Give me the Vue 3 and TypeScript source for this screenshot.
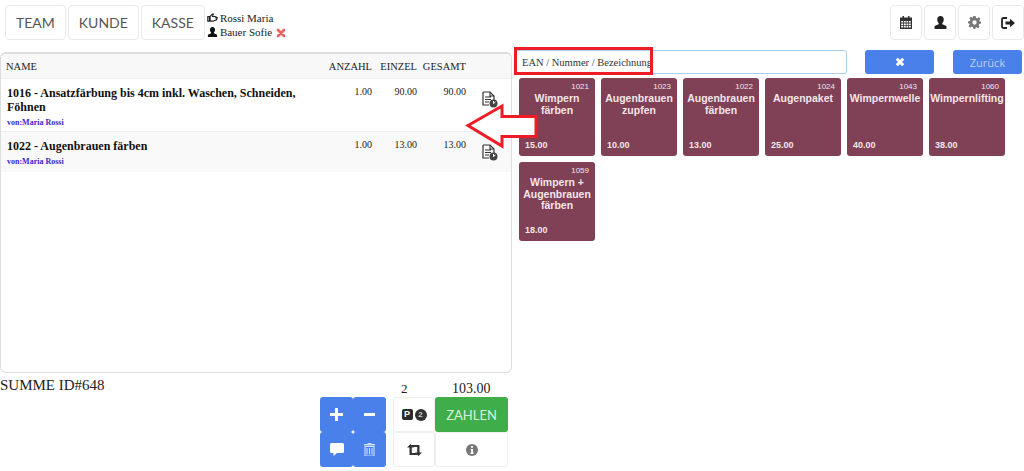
<script setup lang="ts">
interface CartItem {
  id: number;
  name: string;
  qty: string;
  single: string;
  total: string;
  by: string;
}

interface Tile {
  id: number;
  name: string;
  price: string;
}

const cart: CartItem[] = [
  { id: 1016, name: '1016 - Ansatzfärbung bis 4cm inkl. Waschen, Schneiden, Föhnen', qty: '1.00', single: '90.00', total: '90.00', by: 'von:Maria Rossi' },
  { id: 1022, name: '1022 - Augenbrauen färben', qty: '1.00', single: '13.00', total: '13.00', by: 'von:Maria Rossi' },
];

const tiles: Tile[] = [
  { id: 1021, name: 'Wimpern färben', price: '15.00' },
  { id: 1023, name: 'Augenbrauen zupfen', price: '10.00' },
  { id: 1022, name: 'Augenbrauen färben', price: '13.00' },
  { id: 1024, name: 'Augenpaket', price: '25.00' },
  { id: 1043, name: 'Wimpernwelle', price: '40.00' },
  { id: 1060, name: 'Wimpernlifting', price: '38.00' },
  { id: 1059, name: 'Wimpern + Augenbrauen färben', price: '18.00' },
];

const tabs = ['TEAM', 'KUNDE', 'KASSE'];
</script>

<template>
  <div class="page">
    <header class="top">
      <div class="tabs">
        <button v-for="tab in tabs" :key="tab" class="tab">{{ tab }}</button>
      </div>
      <div class="people">
        <div class="person">
          <svg class="mini" viewBox="0 0 14 12"><path d="M1 4h2v6H1zM4 4l3-3h1l-1 3h3a2 2 0 0 1 0 5l-2 1H4z" fill="none" stroke="#222" stroke-width="1.4" /><path d="M10 5h4v1.4h-4z" fill="#222" /></svg>
          Rossi Maria
        </div>
        <div class="person">
          <svg class="mini" viewBox="0 0 12 12"><path d="M6 0c2 0 3 1.400 3 3.200 0 1.500-.7 2.700-1.300 3.300v1l3.800 1.700V12H.5V9.200l3.800-1.700v-1C3.700 5.900 3 4.700 3 3.200 3 1.400 4 0 6 0z" fill="#111" /></svg>
          Bauer Sofie
          <svg class="cross" viewBox="0 0 10 10"><path d="M2 2l6 6M8 2l-6 6" stroke="#f0605f" stroke-width="2.600" stroke-linecap="round" /></svg>
        </div>
      </div>
      <div class="top-icons">
        <button class="icon-btn">
          <svg width="12" height="13" viewBox="0 0 12 13"><path d="M2.500 0h1.500v1.500h4V0h1.500v1.500H12V13H0V1.500h2.500z" fill="#333" /><path d="M1.200 5h2v1.600h-2zM4 5h1.800v1.600H4zM6.500 5h1.800v1.600H6.500zM9 5h1.800v1.600H9zM1.200 7.400h2V9h-2zM4 7.400h1.800V9H4zM6.500 7.400h1.800V9H6.500zM9 7.400h1.800V9H9zM1.200 9.800h2v1.800h-2zM4 9.800h1.800v1.800H4zM6.500 9.800h1.800v1.800H6.500zM9 9.800h1.800v1.800H9z" fill="#fff" /></svg>
        </button>
        <button class="icon-btn">
          <svg width="13" height="13" viewBox="0 0 12 12"><path d="M6 0c2 0 3 1.400 3 3.200 0 1.500-.7 2.700-1.300 3.300v1l3.800 1.700V12H.5V9.200l3.800-1.700v-1C3.700 5.900 3 4.700 3 3.200 3 1.400 4 0 6 0z" fill="#222" /></svg>
        </button>
        <button class="icon-btn">
          <svg width="13" height="13" viewBox="0 0 24 24"><path d="M10 0h4l.7 3.400 2.300 1 3-1.900 2.800 2.800-1.900 3 1 2.300L24 10v4l-3.400.7-1 2.300 1.900 3-2.800 2.800-3-1.900-2.300 1L14 24h-4l-.7-3.400-2.300-1-3 1.900-2.800-2.800 1.900-3-1-2.300L0 14v-4l3.400-.7 1-2.300-1.900-3L5.300 1.200l3 1.900 1-.9zM12 8a4 4 0 1 0 0 8 4 4 0 0 0 0-8z" fill="#777" fill-rule="evenodd" /></svg>
        </button>
        <button class="icon-btn">
          <svg width="14" height="12" viewBox="0 0 14 12"><path d="M6 1H2.500A1.500 1.500 0 0 0 1 2.500v7A1.500 1.500 0 0 0 2.500 11H6" fill="none" stroke="#222" stroke-width="1.800" /><path d="M4.500 4.500H9V1.800L14 6l-5 4.200V7.500H4.500z" fill="#222" /></svg>
        </button>
      </div>
    </header>

    <main class="main">
      <section class="left">
        <div class="panel">
          <div class="row head">
            <div class="col-name">NAME</div>
            <div class="col-num qty">ANZAHL</div>
            <div class="col-num single">EINZEL</div>
            <div class="col-num total">GESAMT</div>
            <div class="col-icon"></div>
          </div>
          <div v-for="item in cart" :key="item.id" class="row item">
            <div class="col-name">
              <div class="item-name">{{ item.name }}</div>
              <div class="item-by">{{ item.by }}</div>
            </div>
            <div class="col-num qty">{{ item.qty }}</div>
            <div class="col-num single">{{ item.single }}</div>
            <div class="col-num total">{{ item.total }}</div>
            <div class="col-icon">
              <svg width="16" height="17" viewBox="0 0 16 17">
                <path d="M1 1h7l4 4v4M1 1v13h6" fill="none" stroke="#333" stroke-width="1.200" />
                <path d="M8 1v4h4M3 6h6M3 8.500h6M3 11h4" fill="none" stroke="#333" stroke-width="1.100" />
                <circle cx="11.500" cy="12.500" r="4" fill="#444" />
                <path d="M11.500 10v2.500l2-1.500" fill="none" stroke="#fff" stroke-width="1" />
              </svg>
            </div>
          </div>
        </div>

        <div class="footer">
          <div class="sum-label">SUMME ID#648</div>
          <div class="count">2</div>
          <div class="sum">103.00</div>
          <button class="act blue plus">
            <svg width="13" height="13" viewBox="0 0 13 13"><path d="M5 0h3v5h5v3H8v5H5V8H0V5h5z" fill="#fff" /></svg>
          </button>
          <button class="act blue minus">
            <svg width="11" height="3" viewBox="0 0 11 3"><rect width="11" height="3" fill="#fff" /></svg>
          </button>
          <button class="act plain park">
            <span class="p-badge">P</span><span class="p-count">2</span>
          </button>
          <button class="act green pay">ZAHLEN</button>
          <button class="act blue note">
            <svg width="14" height="13" viewBox="0 0 14 13"><path d="M1.500 0h11A1.500 1.500 0 0 1 14 1.500v7a1.500 1.500 0 0 1-1.500 1.500H7l-3.500 3v-3h-2A1.500 1.500 0 0 1 0 8.500v-7A1.500 1.500 0 0 1 1.500 0z" fill="#fff" /></svg>
          </button>
          <button class="act blue trash">
            <svg width="11" height="13" viewBox="0 0 11 13"><path d="M3.500 1V0h4v1H11v1.500H0V1z" fill="#cfdcf8" /><path d="M1 3.500h9V13H1zM3 5v6.500M5.500 5v6.500M8 5v6.500" fill="none" stroke="#cfdcf8" stroke-width="1.100" /></svg>
          </button>
          <button class="act plain swap">
            <svg width="15" height="12" viewBox="0 0 15 12"><path d="M3.500 0l3.500 3.500H4.800V9H9l1.800 2H3a.5.500 0 0 1-.5-.5V3.500H0z" fill="#333" /><path d="M11.500 12L8 8.500h2.200V3H6L4.200 1H12a.5.500 0 0 1 .5.500v7H15z" fill="#333" /></svg>
          </button>
          <button class="act plain info">
            <svg width="12" height="12" viewBox="0 0 12 12"><circle cx="6" cy="6" r="6" fill="#777" /><path d="M5 2h2v1.700H5zM4.800 5H7v3.500h.6V10H4.500V8.500H5.200V6.300h-.4z" fill="#fff" /></svg>
          </button>
        </div>
      </section>

      <section class="right">
        <div class="search-row">
          <input class="search" type="text" placeholder="EAN / Nummer / Bezeichnung" />
          <button class="clear">
            <svg width="10" height="10" viewBox="0 0 10 10"><path d="M1.800 1.800l6.400 6.400M8.200 1.800L1.800 8.200" stroke="#fff" stroke-width="3" /></svg>
          </button>
          <button class="back">Zurück</button>
        </div>
        <div class="tiles">
          <div v-for="tile in tiles" :key="tile.id" class="tile">
            <div class="tile-id">{{ tile.id }}</div>
            <div class="tile-name">{{ tile.name }}</div>
            <div class="tile-price">{{ tile.price }}</div>
          </div>
        </div>
      </section>
    </main>

    <!-- annotations drawn over the screenshot -->
    <div class="mark-box"></div>
    <svg class="mark-arrow" width="74" height="46" viewBox="0 0 74 46">
      <path d="M3 22.500L37 3v10.500h34v20H37V43z" fill="#fff" stroke="#ee1c25" stroke-width="3" />
    </svg>
  </div>
</template>

<style scoped>
.page {
  position: relative;
  width: 1024px;
  height: 471px;
  overflow: hidden;
  background: #fff;
  font-family: "Liberation Serif", "DejaVu Serif", serif;
  color: #222;
}

button {
  padding: 0;
  cursor: pointer;
  font-family: inherit;
}

.top {
  display: flex;
  align-items: flex-start;
  height: 50px;
  padding: 5px 0 0 5px;
  box-sizing: border-box;
}

.tabs {
  display: flex;
  gap: 2px;
}

.tab {
  height: 35px;
  padding: 0 10px;
  background: #fff;
  border: 1px solid #e9e9e9;
  border-radius: 4px;
  font-family: Lato, "Open Sans", sans-serif;
  font-size: 14px;
  color: #555;
}

.people {
  margin: 6px 0 0 2px;
  font-size: 11px;
  font-weight: 400;
  color: #222;
}

.person {
  display: flex;
  align-items: center;
  gap: 2px;
  height: 14px;
}

.mini {
  width: 11px;
  height: 10px;
}

.cross {
  width: 10px;
  height: 10px;
  margin: 2px 0 0 2px;
}

.top-icons {
  display: flex;
  gap: 2px;
  margin-left: auto;
}

.icon-btn {
  display: flex;
  align-items: center;
  justify-content: center;
  width: 32px;
  height: 35px;
  background: #fff;
  border: 1px solid #e9e9e9;
  border-radius: 4px;
}

.main {
  display: flex;
}

.left {
  width: 512px;
  padding-top: 2px;
}

.panel {
  height: 321px;
  box-sizing: border-box;
  border: 1px solid #ddd;
  border-top-width: 2px;
  border-radius: 6px;
  overflow: hidden;
}

.row {
  display: flex;
  padding-left: 5px;
}

.head {
  height: 24px;
  align-items: center;
  background: #f8f8f8;
  border-bottom: 1px solid #eee;
  font-size: 10.500px;
  color: #222;
}

.item {
  padding: 7px 0 0 6px;
  box-sizing: border-box;
  font-size: 10px;
}

.item:nth-child(2) {
  height: 53px;
  background: #fff;
  border-bottom: 1px solid #eee;
}

.item:nth-child(3) {
  height: 40px;
  background: #f9f9f9;
}

.col-name {
  width: 300px;
  flex: none;
}

.item-name {
  width: 290px;
  font-size: 12px;
  font-weight: 700;
  line-height: 14px;
  color: #111;
}

.item-by {
  margin-top: 4px;
  font-size: 8px;
  font-weight: 700;
  line-height: 10px;
  color: #3a1fd0;
}

.col-num {
  flex: none;
  text-align: right;
}

.qty {
  width: 65px;
}

.single {
  width: 45px;
}

.total {
  width: 49px;
}

.head .qty {
  width: 66px;
}

.col-icon {
  flex: none;
  width: 32px;
  padding: 5px 0 0 16px;
  box-sizing: border-box;
}

.footer {
  display: grid;
  grid-template-columns: 320px 33px 33px 7px 42px 73px;
  grid-template-rows: 19px 35px 35px;
  column-gap: 0;
  margin-top: 5px;
}

.sum-label {
  grid-column: 1;
  grid-row: 1;
  font-size: 15px;
  line-height: 15px;
  color: #222;
}

.count {
  grid-column: 5;
  grid-row: 1;
  padding: 3px 0 0 8px;
  font-size: 13px;
  line-height: 15px;
}

.sum {
  grid-column: 6;
  grid-row: 1;
  padding: 3px 0 0 17px;
  font-size: 14px;
  line-height: 15px;
}

.act {
  display: flex;
  align-items: center;
  justify-content: center;
  border-radius: 3px;
  border: 1px solid transparent;
}

.blue {
  background: #4a80ea;
}

.plain {
  background: #fff;
  border-color: #eee;
}

.green {
  background: #3fae49;
  font-family: Lato, "Open Sans", sans-serif;
  font-size: 13px;
  color: #d7f0d9;
}

.plus, .note { grid-column: 2; }
.minus, .trash { grid-column: 3; }
.park, .swap { grid-column: 5; }
.pay, .info { grid-column: 6; }
.plus, .minus, .park, .pay { grid-row: 2; }
.note, .trash, .swap, .info { grid-row: 3; }

.p-badge {
  width: 11px;
  height: 11px;
  margin-right: 2px;
  background: #2b2b2b;
  border-radius: 2px;
  font-family: "Liberation Sans", sans-serif;
  font-size: 9px;
  font-weight: 700;
  line-height: 11px;
  text-align: center;
  color: #fff;
}

.p-count {
  width: 12px;
  height: 12px;
  background: #333;
  border-radius: 50%;
  font-family: "Liberation Sans", sans-serif;
  font-size: 8px;
  font-weight: 700;
  line-height: 12px;
  text-align: center;
  color: #ccc;
}

.right {
  flex: 1;
  padding-left: 3px;
}

.search-row {
  display: flex;
  height: 24px;
}

.search {
  width: 332px;
  height: 24px;
  box-sizing: border-box;
  padding: 0 6px;
  border: 1px solid #a8d0f0;
  border-radius: 3px;
  outline: none;
  font-family: inherit;
  font-size: 10.500px;
}

.search::placeholder {
  color: #333;
  opacity: 1;
}

.clear {
  display: flex;
  align-items: center;
  justify-content: center;
  width: 69px;
  margin-left: 18px;
  background: #4a80ea;
  border: none;
  border-radius: 3px;
}

.back {
  width: 69px;
  margin-left: 19px;
  background: #4a80ea;
  border: none;
  border-radius: 3px;
  font-family: "Open Sans", sans-serif;
  font-size: 11px;
  color: #bcd2f8;
}

.tiles {
  display: grid;
  grid-template-columns: repeat(6, 76px);
  gap: 6px;
  margin: 4px 0 0 4px;
}

.tile {
  display: flex;
  flex-direction: column;
  height: 78px;
  padding: 3px 6px 5px;
  box-sizing: border-box;
  background: #804055;
  border-radius: 3px;
  font-family: "Liberation Sans", sans-serif;
  color: #f2e6ea;
}

.tile:last-child {
  height: 79px;
}

.tile-id {
  font-size: 8px;
  line-height: 11px;
  text-align: right;
}

.tile-name {
  margin: 1px -5px 0;
  font-size: 10.500px;
  font-weight: 700;
  line-height: 11.500px;
  text-align: center;
}

.tile-price {
  margin-top: auto;
  font-size: 9px;
  font-weight: 700;
  line-height: 11px;
}

.mark-box {
  position: absolute;
  left: 514px;
  top: 47px;
  width: 139px;
  height: 28px;
  box-sizing: border-box;
  border: 3px solid #ee1c25;
}

.mark-arrow {
  position: absolute;
  left: 465px;
  top: 103px;
}
</style>
